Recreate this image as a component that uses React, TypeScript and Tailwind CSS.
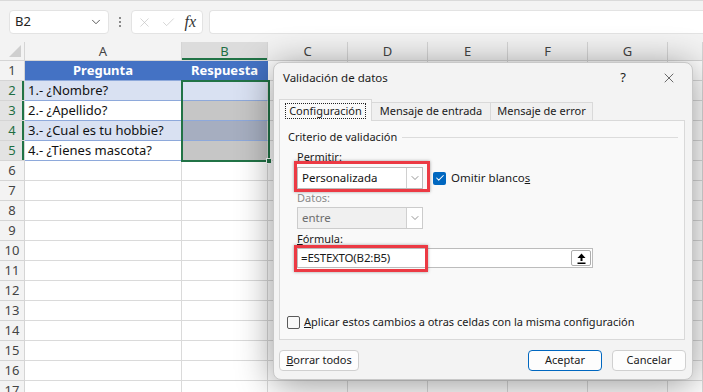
import { ChevronDown, X, Check } from "lucide-react";

const COLS = ["A", "B", "C", "D", "E", "F", "G", ""];
const ROWS = Array.from({ length: 17 }, (_, i) => i + 1);

const DATA: Record<number, [string, string]> = {
  1: ["Pregunta", "Respuesta"],
  2: ["1.- ¿Nombre?", ""],
  3: ["2.- ¿Apellido?", ""],
  4: ["3.- ¿Cual es tu hobbie?", ""],
  5: ["4.- ¿Tienes mascota?", ""],
};

function cellClass(r: number, c: number) {
  const base = "h-[20px] border-r border-b flex items-center text-[13px] leading-none whitespace-nowrap overflow-hidden";
  if (r === 1 && c < 2) return `${base} bg-[#4472c4] border-r-[#4472c4] border-b-[#8ea9db] text-white font-bold justify-center`;
  if (r >= 2 && r <= 5 && c === 0) {
    const fill = r % 2 === 0 ? "bg-[#d9e1f2]" : "bg-white";
    return `${base} ${fill} border-r-[#dadada] border-b-[#8ea9db] pl-[3px] text-[#111]`;
  }
  if (r >= 2 && r <= 5 && c === 1) {
    const fill = r === 2 ? "bg-[#d9e1f2]" : r === 4 ? "bg-[#a6aec0]" : "bg-[#c6c6c6]";
    return `${base} ${fill} border-r-[#dadada] border-b-[#8ea9db]`;
  }
  return `${base} bg-white border-[#dadada]`;
}

function SelectBox({ value, disabled }: { value: string; disabled?: boolean }) {
  return (
    <div
      className={`w-[126px] h-[22px] border flex items-stretch ${
        disabled ? "bg-[#f0f0f0] border-[#cccccc] text-[#6d6d6d]" : "bg-white border-[#bcbcbc] text-[#111]"
      }`}
    >
      <div className="flex-1 flex items-center pl-[4px] text-[11.5px]">{value}</div>
      <div className="w-[16px] bg-white border-l border-[#d0d0d0] flex items-center justify-center">
        <ChevronDown size={12} strokeWidth={1.25} className="text-[#555]" />
      </div>
    </div>
  );
}

function Button({ children, primary, w }: { children: React.ReactNode; primary?: boolean; w: string }) {
  return (
    <div
      className={`${w} h-[21px] bg-[#fdfdfd] border rounded-[4px] flex items-center justify-center ${
        primary ? "border-[#0067c0]" : "border-[#d0d0d0]"
      }`}
    >
      {children}
    </div>
  );
}

export default function App() {
  return (
    <div className="relative w-[703px] h-[392px] overflow-hidden bg-white font-['Noto_Sans',sans-serif] text-[#222]">
      {/* Formula bar */}
      <div className="h-[42px] bg-[#f3f3f3] border-t border-[#dadada] flex items-start pt-[9px] pl-[9px]">
        <div className="w-[100px] h-[24px] bg-white rounded-[4px] border border-[#e3e3e3] flex items-center justify-between pl-[5px] pr-[5px] text-[13px]">
          <span>B2</span>
          <ChevronDown size={14} strokeWidth={1.5} className="text-[#444]" />
        </div>
        <div className="w-[22px] h-[24px] flex flex-col items-center justify-center gap-[2px]">
          <div className="w-[2px] h-[2px] bg-[#8a8a8a]" />
          <div className="w-[2px] h-[2px] bg-[#8a8a8a]" />
          <div className="w-[2px] h-[2px] bg-[#8a8a8a]" />
        </div>
        <div className="w-[72px] h-[24px] bg-white rounded-[4px] border border-[#e3e3e3] flex items-center justify-between px-[5px]">
          <X size={15} strokeWidth={1} className="text-[#bdbdbd]" />
          <Check size={15} strokeWidth={1} className="text-[#bdbdbd]" />
          <span className="font-['Liberation_Serif',serif] italic text-[16px] text-[#333] leading-none pr-[1px]">fx</span>
        </div>
        <div className="flex-1 h-[24px] ml-[6px] bg-white rounded-l-[4px] border border-r-0 border-[#e3e3e3]" />
      </div>

      {/* Sheet */}
      <div className="relative">
        <div className="grid grid-cols-[25px_157px_86px_80px_80px_80px_80px_80px_35px]">
          <div className="h-[19px] bg-[#f3f3f3] border-r border-b border-[#d5d5d5] flex items-end justify-end pr-[3px] pb-[3px]">
            <svg width="12" height="12" viewBox="0 0 12 12">
              <polygon points="12,0 12,12 0,12" fill="#cfcfcf" />
            </svg>
          </div>
          {COLS.map((c, i) => (
            <div
              key={"h" + i}
              className={`h-[19px] border-r border-b flex items-center justify-center text-[13px] leading-none ${
                c === "B"
                  ? "bg-[#dcdcdc] border-r-[#d5d5d5] border-b-[#d5d5d5] text-[#1e6e42] shadow-[inset_0_-2px_0_#217346]"
                  : "bg-[#f3f3f3] border-[#d5d5d5] text-[#444]"
              }`}
            >
              {c}
            </div>
          ))}
          {ROWS.map((r) => (
            <div key={r} className="contents">
              <div
                className={`h-[20px] border-r border-b flex items-center justify-center text-[13px] leading-none ${
                  r >= 2 && r <= 5
                    ? "bg-[#e3e3e3] border-[#d5d5d5] text-[#1e6e42] shadow-[inset_-2px_0_0_#217346]"
                    : "bg-[#f3f3f3] border-[#d5d5d5] text-[#444]"
                }`}
              >
                {r}
              </div>
              {COLS.map((_, c) => (
                <div key={c} className={cellClass(r, c)}>
                  {c < 2 && DATA[r] ? DATA[r][c] : ""}
                </div>
              ))}
            </div>
          ))}
        </div>
        {/* selection B2:B5 */}
        <div className="absolute left-[181px] top-[38px] w-[89px] h-[82px] border-2 border-[#217346]" />
        <div className="absolute left-[266px] top-[116px] w-[6px] h-[6px] bg-[#217346] border border-white" />
      </div>

      {/* Dialog */}
      <div className="absolute left-[273px] top-[62px] w-[420px] h-[318px] bg-[#f3f3f3] border border-[#c8c8c8] rounded-[8px] shadow-[0_4px_36px_rgba(0,0,0,0.42)] flex flex-col text-[11px] text-[#1a1a1a]">
        <div className="h-[37px] flex items-start pt-[7px] pl-[9px]">
          <span className="text-[11.5px] leading-[16px]">Validación de datos</span>
          <div className="ml-auto flex items-center h-[16px]">
            <div className="w-[46px] flex justify-center text-[13px]">?</div>
            <div className="w-[46px] flex justify-center">
              <X size={16} strokeWidth={1} className="text-[#222]" />
            </div>
          </div>
        </div>

        <div className="flex items-end h-[21px] pl-[5px] -mb-px relative z-10">
          <div className="w-[93px] h-[22px] bg-[#f9f9f9] border border-b-0 border-[#d9d9d9] flex items-start justify-center pt-[3px]">
            <span className="border border-dotted border-[#222] px-[3px] leading-[14px]">Configuración</span>
          </div>
          <div className="w-[119px] h-[19px] bg-[#f0f0f0] border border-l-0 border-[#d9d9d9] flex items-center justify-center">
            Mensaje de entrada
          </div>
          <div className="w-[102px] h-[19px] bg-[#f0f0f0] border border-l-0 border-[#d9d9d9] flex items-center justify-center">
            Mensaje de error
          </div>
        </div>

        <div className="ml-[5px] w-[406px] h-[220px] bg-[#f9f9f9] border border-[#d9d9d9] relative flex flex-col">
          <div className="mt-[8px] h-[16px] flex items-center pl-[8px] pr-[6px]">
            <span>Criterio de validación</span>
            <div className="flex-1 h-px bg-[#dcdcdc] ml-[5px]" />
          </div>
          <div className="pl-[17px] flex flex-col">
            <div className="mt-[4px] h-[16px] flex items-center">Permitir:</div>
            <div className="mt-[2px] flex items-center">
              <SelectBox value="Personalizada" />
              <div className="ml-[10px] w-[13px] h-[13px] rounded-[2px] bg-[#0067c0] flex items-center justify-center">
                <Check size={10} strokeWidth={2.5} className="text-white" />
              </div>
              <span className="ml-[5px] text-[11.5px]">
                Omitir blanco<u>s</u>
              </span>
            </div>
            <div className="mt-[1px] h-[16px] flex items-center text-[#8a8a8a]">Datos:</div>
            <div className="mt-[1px]">
              <SelectBox value="entre" disabled />
            </div>
            <div className="mt-[2px] h-[16px] flex items-center">
              <span>
                <u>F</u>órmula:
              </span>
            </div>
            <div className="mt-[1px] w-[296px] h-[20px] bg-white border border-[#bcbcbc] flex items-center">
              <span className="pl-[3px] text-[11.5px] tracking-[-0.2px]">=ESTEXTO(B2:B5)</span>
              <div className="ml-auto mr-[1px] w-[20px] h-[16px] bg-white border border-[#adadad] rounded-[2px] flex items-center justify-center">
                <svg width="9" height="11" viewBox="0 0 9 11">
                  <polygon points="4.5,0.5 8.5,5 5.5,5 5.5,8 3.5,8 3.5,5 0.5,5" fill="#000" />
                  <rect x="0.5" y="9.5" width="8" height="1.5" fill="#000" />
                </svg>
              </div>
            </div>
          </div>
          <div className="mt-auto mb-[9px] pl-[7px] h-[16px] flex items-center">
            <div className="w-[13px] h-[13px] rounded-[2px] border border-[#5a5a5a] bg-[#f9f9f9]" />
            <span className="ml-[4px]">
              <u>A</u>plicar estos cambios a otras celdas con la misma configuración
            </span>
          </div>

          {/* annotation boxes */}
          <div className="absolute left-[14px] top-[40px] w-[136px] h-[31px] border-[3px] border-[#ec3a44] shadow-[0_0_3px_rgba(0,0,0,0.35)]" />
          <div className="absolute left-[14px] top-[124px] w-[134px] h-[27px] border-[3px] border-[#ec3a44] shadow-[0_0_3px_rgba(0,0,0,0.35)]" />
        </div>

        <div className="mt-[10px] pl-[5px] pr-[6px] flex items-center">
          <Button w="w-[80px]">
            <span>
              <u>B</u>orrar todos
            </span>
          </Button>
          <div className="ml-auto flex items-center gap-[10px]">
            <Button w="w-[74px]" primary>
              Aceptar
            </Button>
            <Button w="w-[74px]">Cancelar</Button>
          </div>
        </div>
      </div>
    </div>
  );
}
